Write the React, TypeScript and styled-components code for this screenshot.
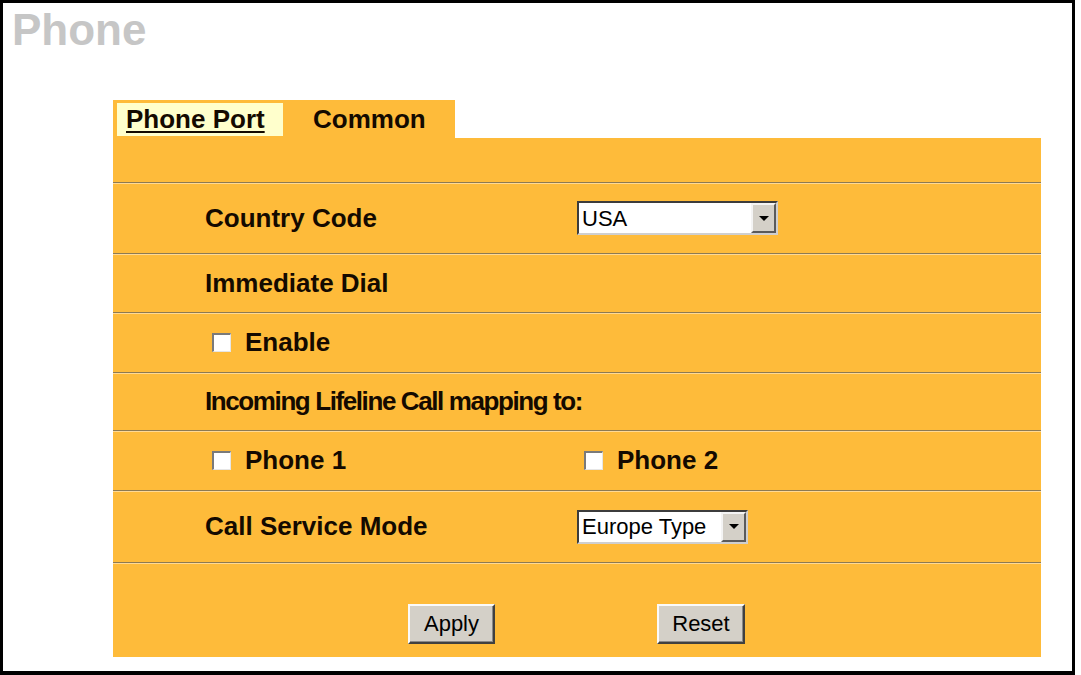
import styled, { createGlobalStyle } from 'styled-components';

const ORANGE = '#febb3a';
const INK = '#140a00';

const GlobalStyle = createGlobalStyle`
  html, body {
    margin: 0;
    padding: 0;
    background: #fff;
  }
  body {
    font-family: 'Liberation Sans', Arial, sans-serif;
    color: ${INK};
  }
`;

const Frame = styled.div`
  box-sizing: border-box;
  width: 1075px;
  height: 675px;
  border: 3px solid #000;
  border-bottom-width: 4px;
  overflow: hidden;
`;

const Title = styled.h1`
  margin: 5px 0 0 9px;
  font-size: 44px;
  line-height: 44px;
  font-weight: bold;
  color: #c6c6c6;
`;

const Panel = styled.div`
  width: 928px;
  margin: 48px 0 0 110px;
`;

const TabStrip = styled.div`
  display: flex;
  align-items: center;
  box-sizing: border-box;
  width: 342px;
  height: 38px;
  padding: 3px 4px 2px;
  background: ${ORANGE};
`;

const Tab = styled.div<{ $active?: boolean }>`
  display: flex;
  align-items: center;
  box-sizing: border-box;
  height: 33px;
  width: ${({ $active }) => ($active ? '166px' : 'auto')};
  padding-left: ${({ $active }) => ($active ? '9px' : '30px')};
  background: ${({ $active }) => ($active ? '#ffffcc' : 'transparent')};
  font-size: 26px;
  font-weight: bold;
  text-decoration: ${({ $active }) => ($active ? 'underline' : 'none')};
  text-decoration-thickness: 2px;
  text-underline-offset: 3px;
  cursor: pointer;
`;

const Body = styled.div`
  box-sizing: border-box;
  height: 519px;
  padding-top: 44px;
  background: ${ORANGE};
`;

const Row = styled.div<{ $h: number }>`
  display: grid;
  grid-template-columns: 372px 1fr;
  align-items: center;
  box-sizing: border-box;
  height: ${({ $h }) => $h}px;
  padding-left: 92px;
  border-top: 1px solid #8d7a52;
  box-shadow: inset 0 1px 0 #ffd995;
`;

const Label = styled.div<{ $tight?: boolean }>`
  font-size: 26px;
  font-weight: bold;
  letter-spacing: ${({ $tight }) => ($tight ? '-1.4px' : 'normal')};
  white-space: nowrap;
`;

const CheckLabel = styled.label`
  display: flex;
  align-items: center;
  gap: 14px;
  padding-left: 7px;
  font-size: 26px;
  font-weight: bold;
`;

const Checkbox = styled.input`
  appearance: none;
  margin: 0;
  width: 19px;
  height: 19px;
  box-sizing: border-box;
  background: #fff;
  border-style: solid;
  border-width: 2px 1px 1px 2px;
  border-color: #7a7a7a #e6e6e6 #e6e6e6 #7a7a7a;
`;

const SelectBox = styled.div<{ $w: number }>`
  display: flex;
  box-sizing: border-box;
  width: ${({ $w }) => $w}px;
  height: 34px;
  border: 2px solid;
  border-color: #3c3c3c #cfcfcf #cfcfcf #3c3c3c;
  background: #fff;
`;

const Select = styled.select`
  appearance: none;
  flex: 1;
  min-width: 0;
  border: none;
  outline: none;
  background: #fff;
  padding: 0 3px;
  font-family: 'Liberation Sans', Arial, sans-serif;
  font-size: 22px;
  color: #000;
`;

const Arrow = styled.span`
  display: flex;
  align-items: center;
  justify-content: center;
  box-sizing: border-box;
  width: 25px;
  background: #d4d0c8;
  border: 2px solid;
  border-color: #f4f4f4 #5a5a5a #5a5a5a #f4f4f4;

  &::after {
    content: '';
    border-left: 5px solid transparent;
    border-right: 5px solid transparent;
    border-top: 5px solid #000;
  }
`;

const Footer = styled.div`
  display: flex;
  gap: 162px;
  box-sizing: border-box;
  height: 95px;
  padding: 41px 0 0 295px;
  border-top: 1px solid #8d7a52;
  box-shadow: inset 0 1px 0 #ffd995;
`;

const Button = styled.button<{ $w: number }>`
  box-sizing: border-box;
  width: ${({ $w }) => $w}px;
  height: 40px;
  padding: 0;
  font-family: 'Liberation Sans', Arial, sans-serif;
  font-size: 22px;
  color: #000;
  background: #d4d0c8;
  border: 2px solid;
  border-color: #fafafa #404040 #404040 #fafafa;
  box-shadow: inset -1px -1px 0 #888;
  cursor: pointer;
`;

function Dropdown({ width, value, options }: { width: number; value: string; options: string[] }) {
  return (
    <SelectBox $w={width}>
      <Select defaultValue={value}>
        {options.map((o) => (
          <option key={o}>{o}</option>
        ))}
      </Select>
      <Arrow />
    </SelectBox>
  );
}

export default function App() {
  return (
    <>
      <GlobalStyle />
      <Frame>
        <Title>Phone</Title>
        <Panel>
          <TabStrip>
            <Tab $active>Phone Port</Tab>
            <Tab>Common</Tab>
          </TabStrip>
          <Body>
            <Row $h={71}>
              <Label>Country Code</Label>
              <Dropdown width={201} value='USA' options={['USA', 'Germany', 'France', 'Japan']} />
            </Row>
            <Row $h={59}>
              <Label>Immediate Dial</Label>
            </Row>
            <Row $h={60}>
              <CheckLabel>
                <Checkbox type='checkbox' />
                Enable
              </CheckLabel>
            </Row>
            <Row $h={58}>
              <Label $tight>Incoming Lifeline Call mapping to:</Label>
            </Row>
            <Row $h={60}>
              <CheckLabel>
                <Checkbox type='checkbox' />
                Phone 1
              </CheckLabel>
              <CheckLabel>
                <Checkbox type='checkbox' />
                Phone 2
              </CheckLabel>
            </Row>
            <Row $h={72}>
              <Label>Call Service Mode</Label>
              <Dropdown width={171} value='Europe Type' options={['Europe Type', 'USA Type']} />
            </Row>
            <Footer>
              <Button $w={87}>Apply</Button>
              <Button $w={88}>Reset</Button>
            </Footer>
          </Body>
        </Panel>
      </Frame>
    </>
  );
}
